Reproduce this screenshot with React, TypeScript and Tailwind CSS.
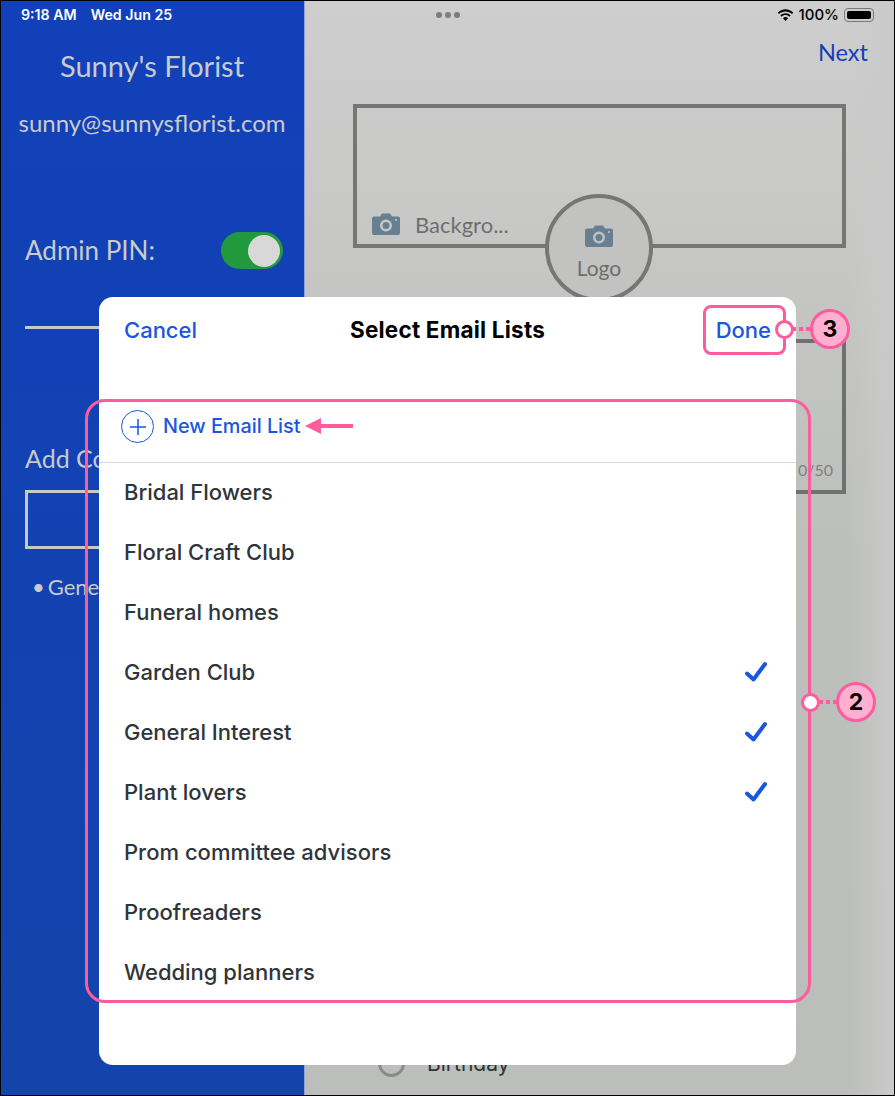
const lists = [
  { name: "Bridal Flowers", checked: false },
  { name: "Floral Craft Club", checked: false },
  { name: "Funeral homes", checked: false },
  { name: "Garden Club", checked: true },
  { name: "General Interest", checked: true },
  { name: "Plant lovers", checked: true },
  { name: "Prom committee advisors", checked: false },
  { name: "Proofreaders", checked: false },
  { name: "Wedding planners", checked: false },
];

function CameraIcon({ className }: { className: string }) {
  return (
    <svg viewBox="0 0 28 22" className={className}>
      <path
        fill="#687f92"
        fillRule="evenodd"
        d="M2 3.5h6L10 0.5h8l2 3h6a2 2 0 0 1 2 2V20a2 2 0 0 1-2 2H2a2 2 0 0 1-2-2V5.500a2 2 0 0 1 2-2ZM14 6.500a6 6 0 1 0 0 12a6 6 0 0 0 0-12ZM14 9a3.500 3.500 0 1 1 0 7a3.500 3.500 0 0 1 0-7ZM24 6a1 1 0 1 0 0 2a1 1 0 0 0 0-2Z"
      />
    </svg>
  );
}

function WifiIcon() {
  return (
    <svg viewBox="0 0 18 13" className="w-[17px] h-[13px]">
      <path fill="#000" d="M9 2.200c2.700 0 5.100 1 6.900 2.800l1.300-1.400C15 1.400 12.200 0 9 0S3 1.400.8 3.600L2.100 5C3.900 3.200 6.300 2.200 9 2.200Z" />
      <path fill="#000" d="M9 6.100c1.600 0 3 .6 4.100 1.700l1.300-1.400C13 5 11.100 4.100 9 4.100S5 5 3.600 6.400l1.300 1.400C6 6.700 7.400 6.100 9 6.100Z" />
      <path fill="#000" d="M9 8.200c-1 0-1.900.4-2.600 1.100L9 12.400l2.600-3.100C10.900 8.600 10 8.200 9 8.200Z" />
    </svg>
  );
}

function Check() {
  return (
    <svg viewBox="0 0 24 22" className="w-[24px] h-[22px]">
      <path d="M3 12.500 9.500 18.500 21 3" fill="none" stroke="#1a56e0" strokeWidth="4" strokeLinecap="round" strokeLinejoin="round" />
    </svg>
  );
}

function Badge({ label, className }: { label: string; className: string }) {
  return (
    <div className={`absolute w-[40px] h-[40px] rounded-full border-[3px] border-[#ff5c9e] bg-[#ffb0d0] flex items-center justify-center font-['Inter',sans-serif] font-bold text-[23px] text-black ${className}`}>
      {label}
    </div>
  );
}

function Dots({ className }: { className: string }) {
  return (
    <div className={`absolute flex gap-[3px] ${className}`}>
      <span className="w-[4px] h-[4px] bg-[#ff5c9e]" />
      <span className="w-[4px] h-[4px] bg-[#ff5c9e]" />
      <span className="w-[4px] h-[4px] bg-[#ff5c9e]" />
    </div>
  );
}

export default function App() {
  return (
    <div className="relative w-[895px] h-[1096px] overflow-hidden flex font-['Lato',sans-serif]">
      {/* sidebar behind the sheet */}
      <div className="w-[305px] h-full shrink-0 flex flex-col bg-gradient-to-b from-[#1240ba] to-[#1344aa] text-[#c9cbcd] border-r border-[#8fa3d8]">
        <div className="h-[30px] pl-[21px] pt-[6px] flex gap-[14px] font-['Inter',sans-serif] font-semibold text-[14.200px] leading-[18px] text-white">
          <span>9:18 AM</span>
          <span>Wed Jun 25</span>
        </div>
        <div className="mt-[17px] text-center text-[29px] leading-[38px]">Sunny's Florist</div>
        <div className="mt-[23px] text-center text-[24px] leading-[30px]">sunny@sunnysflorist.com</div>
        <div className="mt-[94px] pl-[25px] pr-[21px] h-[37px] flex items-center justify-between">
          <span className="-mt-[2px] text-[26px] leading-[32px]">Admin PIN:</span>
          <div className="w-[62px] h-[37px] rounded-full bg-[#219a3e] flex items-center justify-end pr-[3px]">
            <div className="w-[32px] h-[32px] rounded-full bg-[#d8d8d8]" />
          </div>
        </div>
        <div className="mt-[57px] ml-[25px] w-[255px] h-[3px] bg-[#c8c8c8]" />
        <div className="mt-[113px] pl-[25px] text-[25px] leading-[32px] whitespace-nowrap">Add Contacts</div>
        <div className="mt-[16px] ml-[25px] w-[255px] h-[59px] border-[3px] border-[#c8c8c8]" />
        <div className="mt-[24px] pl-[32px] flex gap-[3px] text-[22px] leading-[28px] whitespace-nowrap">
          <span>•</span>
          <span>General</span>
        </div>
      </div>

      {/* form behind the sheet */}
      <div className="relative flex-1 h-full flex flex-col bg-gradient-to-b from-[#cecece] via-[#bdbfbb] to-[#bcbebb] pl-[48px] pr-[49px]">
        <div className="absolute left-[542px] top-0 w-[48px] h-full bg-gradient-to-r from-transparent to-[#cacaca]" />
        <div className="relative h-[30px] pt-[6px] flex items-start font-['Inter',sans-serif] font-medium text-[13px] leading-[18px] text-black">
          <div className="flex-1 flex justify-start gap-[3px] pl-[83px] pt-[6px]">
            <span className="w-[6px] h-[6px] rounded-full bg-[#7c7c7c]" />
            <span className="w-[6px] h-[6px] rounded-full bg-[#7c7c7c]" />
            <span className="w-[6px] h-[6px] rounded-full bg-[#7c7c7c]" />
          </div>
          <div className="flex items-center gap-[5px] -mr-[28px] text-[15px]">
            <WifiIcon />
            <span>100%</span>
            <div className="w-[30px] h-[14px] rounded-[4px] border border-[#777] p-[2px]">
              <div className="w-full h-full rounded-[2px] bg-black" />
            </div>
          </div>
        </div>
        <div className="relative mt-[6px] mb-[2px] -mr-[22px] text-right text-[23.500px] leading-[32px] text-[#1240ba]">Next</div>
        <div className="relative mt-[34px] h-[144px] border-[4px] border-[#767775] flex items-end pl-[15px] pb-[5px] gap-[15px]">
          <CameraIcon className="w-[28px] h-[22px] mb-[4px]" />
          <span className="text-[22px] leading-[28px] text-[#6d6f6f]">Backgro...</span>
          {/* logo circle sits across the box edge */}
          <div className="absolute left-[188px] top-[86px] w-[108px] h-[108px] rounded-full border-[4px] border-[#767775] bg-[#c2c3c0] flex flex-col items-center pt-[27px]">
            <CameraIcon className="w-[28px] h-[22px]" />
            <span className="mt-[8px] text-[21px] leading-[26px] text-[#6d6f6f]">Logo</span>
          </div>
        </div>
        <div className="relative mt-[91px] h-[155px] border-[4px] border-[#6f716e] flex items-end justify-end pr-[9px] pb-[9px] text-[16px] leading-[22px] text-[#808280]">
          0/50
        </div>
        <div className="relative mt-[556px] flex items-center gap-[22px] pl-[25px]">
          <div className="w-[27px] h-[27px] rounded-full border-[3px] border-[#8b8c8a]" />
          <span className="font-['Inter',sans-serif] text-[21px] leading-[26px] text-[#2e3234]">Birthday</span>
        </div>
      </div>

      {/* sheet */}
      <div className="absolute left-[99px] top-[297px] w-[697px] h-[768px] rounded-[14px] bg-white flex flex-col font-['Inter',sans-serif]">
        <div className="h-[66px] px-[25px] grid grid-cols-[1fr_auto_1fr] items-center text-[22px] font-medium text-[#1a56e0]">
          <span>Cancel</span>
          <span className="font-bold text-black text-[22.500px] tracking-[0.2px]">Select Email Lists</span>
          <span className="text-right">Done</span>
        </div>
        <div className="mt-[40px] -mb-[1px] h-[60px] border-b border-[#d9d9d9] pl-[22px] pb-[12px] flex items-center gap-[9px]">
          <div className="w-[33px] h-[33px] rounded-full border border-[#1a56e0] flex items-center justify-center">
            <svg viewBox="0 0 16 16" className="w-[16px] h-[16px]">
              <path d="M8 0v16M0 8h16" stroke="#1a56e0" strokeWidth="1.500" />
            </svg>
          </div>
          <span className="text-[19.800px] font-medium text-[#1a56e0]">New Email List</span>
        </div>
        {lists.map((item) => (
          <div key={item.name} className="h-[60px] pl-[25px] pr-[28px] flex items-center justify-between text-[22px] font-medium text-[#2f353a]">
            <span>{item.name}</span>
            {item.checked && <Check />}
          </div>
        ))}
      </div>

      {/* pink callouts */}
      <div className="absolute left-[85px] top-[399px] w-[726px] h-[604px] rounded-[20px] border-[3px] border-[#ff5c9e]" />
      <div className="absolute left-[703px] top-[305px] w-[83px] h-[50px] rounded-[8px] border-[3px] border-[#ff5c9e]" />
      <Dots className="left-[792px] top-[327px]" />
      <div className="absolute left-[775px] top-[320px] w-[19px] h-[19px] rounded-full border-[3px] border-[#ff5c9e] bg-white" />
      <Badge label="3" className="left-[810px] top-[309px]" />
      <Dots className="left-[819px] top-[700px]" />
      <div className="absolute left-[801px] top-[693px] w-[19px] h-[19px] rounded-full border-[3px] border-[#ff5c9e] bg-white" />
      <Badge label="2" className="left-[836px] top-[682px]" />
      <svg viewBox="0 0 48 16" className="absolute left-[305px] top-[418px] w-[48px] h-[16px]">
        <path d="M0 8 16 0v6h32v4H16v6Z" fill="#ff5c9e" />
      </svg>

      <div className="absolute inset-0 border border-black pointer-events-none" />
    </div>
  );
}
